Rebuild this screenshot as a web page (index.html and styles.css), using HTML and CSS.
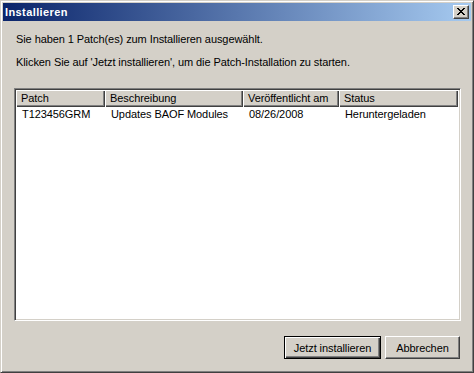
FILE: index.html
```html
<!DOCTYPE html>
<html lang="de">
<head>
<meta charset="utf-8">
<title>Installieren</title>
<link rel="stylesheet" href="styles.css">
</head>
<body>
<div class="window">
  <div class="titlebar">
    <span class="title">Installieren</span>
    <button class="close" aria-label="Schließen">
      <svg width="8" height="7" viewBox="0 0 8 7" shape-rendering="crispEdges">
        <path d="M0 0h2v1h-2z M1 1h2v1h-2z M2 2h4v1h-4z M3 3h2v1h-2z M2 4h4v1h-4z M1 5h2v1h-2z M0 6h2v1h-2z M6 0h2v1h-2z M5 1h2v1h-2z M5 5h2v1h-2z M6 6h2v1h-2z" fill="#000"/>
      </svg>
    </button>
  </div>
  <div class="content">
    <p class="msg first">Sie haben 1 Patch(es) zum Installieren ausgewählt.</p>
    <p class="msg second">Klicken Sie auf 'Jetzt installieren', um die Patch-Installation zu starten.</p>
    <div class="listview">
      <div class="header">
        <div class="hcell c1">Patch</div>
        <div class="hcell c2">Beschreibung</div>
        <div class="hcell c3">Veröffentlicht am</div>
        <div class="hcell c4">Status</div>
      </div>
      <div class="row">
        <div class="cell c1">T123456GRM</div>
        <div class="cell c2">Updates BAOF Modules</div>
        <div class="cell c3">08/26/2008</div>
        <div class="cell c4">Heruntergeladen</div>
      </div>
    </div>
    <div class="buttons">
      <button class="btn default install">Jetzt installieren</button>
      <button class="btn cancel">Abbrechen</button>
    </div>
  </div>
</div>
</body>
</html>
```
FILE: styles.css
```css
html, body {
  margin: 0;
  padding: 0;
  background: #d4d0c8;
}
body {
  font-family: "Liberation Sans", Arial, sans-serif;
  font-size: 11px;
  letter-spacing: -0.08px;
  color: #000;
}
.window {
  box-sizing: border-box;
  width: 474px;
  height: 373px;
  background: #d4d0c8;
  border: 1px solid;
  border-color: #d4d0c8 #404040 #404040 #d4d0c8;
  box-shadow: inset 1px 1px #fff, inset -1px -1px #808080;
  padding: 2px;
  display: flex;
  flex-direction: column;
}
.titlebar {
  height: 18px;
  flex: none;
  background: linear-gradient(to right, #0a246a, #a6caf0);
  display: flex;
  align-items: center;
  justify-content: space-between;
}
.title {
  color: #fff;
  font-weight: bold;
  font-size: 11px;
  letter-spacing: 0.4px;
  line-height: 13px;
  padding-left: 2px;
  padding-top: 1px;
}
.close {
  box-sizing: border-box;
  width: 16px;
  height: 14px;
  margin-right: 2px;
  padding: 0;
  background: #d4d0c8;
  border: 1px solid;
  border-color: #fff #404040 #404040 #fff;
  box-shadow: inset -1px -1px #808080;
  display: flex;
  align-items: center;
  justify-content: center;
}
.close svg {
  display: block;
  margin-left: -1px;
  margin-top: -1px;
}
.content {
  flex: 1;
  display: flex;
  flex-direction: column;
  padding: 0 10px 0 11px;
}
.msg {
  margin: 0;
  padding-left: 2px;
  line-height: 13px;
  white-space: nowrap;
}
.msg.first {
  margin-top: 12px;
}
.msg.second {
  margin-top: 10px;
}
.listview {
  box-sizing: border-box;
  margin-top: 19px;
  height: 233px;
  background: #fff;
  border: 1px solid;
  border-color: #808080 #fff #fff #808080;
  box-shadow: inset 1px 1px #404040, inset -1px -1px #d4d0c8;
  padding: 1px;
}
.header {
  display: flex;
  height: 17px;
}
.hcell {
  box-sizing: border-box;
  height: 17px;
  background: #d4d0c8;
  box-shadow: inset 1px 1px #fff, inset -1px -1px #404040, inset -2px -2px #808080;
  padding-left: 5px;
  line-height: 16px;
  white-space: nowrap;
  overflow: hidden;
}
.row {
  display: flex;
  height: 15px;
}
.cell {
  box-sizing: border-box;
  padding-left: 6px;
  line-height: 15px;
  white-space: nowrap;
  overflow: hidden;
}
.c1 { width: 89px; }
.c2 { width: 138px; }
.c3 { width: 96px; }
.c4 { width: 119px; }
.buttons {
  display: flex;
  justify-content: flex-end;
  gap: 4px;
  margin-top: 15px;
  padding-right: 1px;
}
.btn {
  box-sizing: border-box;
  height: 23px;
  padding: 0;
  font-family: "Liberation Sans", Arial, sans-serif;
  font-size: 11px;
  letter-spacing: -0.08px;
  color: #000;
  background: #d4d0c8;
  border: 1px solid;
  border-color: #fff #404040 #404040 #fff;
  box-shadow: inset -1px -1px #808080;
}
.btn.default {
  border-color: #000;
  box-shadow: inset 1px 1px #fff, inset -1px -1px #404040, inset -2px -2px #808080;
}
.install { width: 97px; }
.cancel { width: 75px; }
```
